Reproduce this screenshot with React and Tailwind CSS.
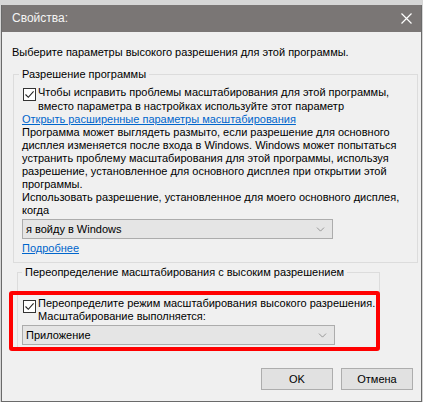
import { ChevronDown } from "lucide-react";

const CheckBox = () => (
  <span className="w-[13px] h-[13px] shrink-0 bg-white border border-[#333333] flex items-center justify-center">
    <svg width="11" height="11" viewBox="0 0 11 11" fill="none">
      <path d="M1.5 5.5 L4.3 8.3 L9.6 2.4" stroke="#222222" strokeWidth="1.1" />
    </svg>
  </span>
);

const Select = ({ value, width }) => (
  <div
    className={`h-[20px] ${width} bg-[#e5e5e5] border border-[#acacac] flex items-center justify-between pl-[3px] pr-[5px]`}
  >
    <span className="leading-[14px]">{value}</span>
    <ChevronDown size={13} strokeWidth={1} color="#555555" />
  </div>
);

const App = () => {
  return (
    <div className="w-[423px] h-[402px] bg-[#d6d6d6] pt-[5px] pl-[1px] overflow-hidden font-['Liberation_Sans',Arial,sans-serif] text-[11px] text-black whitespace-nowrap">
      <div className="w-[421px] h-[397px] bg-[#f0f0f0] border border-t-0 border-[#6a6a6a] flex flex-col">
        {/* Title bar */}
        <div className="h-[27px] bg-[#7a7675] flex items-center justify-between pl-[10px] pr-[9px] shrink-0">
          <span className="text-[#f4f4f4] text-[12px] leading-[15px]">Свойства:</span>
          <svg width="11" height="11" viewBox="0 0 11 11">
            <path d="M0.5 0.5 L10.5 10.5 M10.5 0.5 L0.5 10.5" stroke="#ffffff" strokeWidth="1.2" />
          </svg>
        </div>

        {/* Body */}
        <div className="flex-1 flex flex-col relative">
          <p className="ml-[10px] mt-[13px] leading-[15px]">
            Выберите параметры высокого разрешения для этой программы.
          </p>

          {/* Group 1 */}
          <fieldset className="ml-[11px] mt-[7px] w-[405px] border border-[#dcdcdc] pl-[8px] pr-[4px] pb-[7px]">
            <legend className="-ml-[3px] px-[3px] leading-[15px]">Разрешение программы</legend>
            <div className="flex mt-[3px]">
              <span className="ml-[1px] mt-[3px]">
                <CheckBox />
              </span>
              <span className="ml-[2px] leading-[14px]">
                Чтобы исправить проблемы масштабирования для этой программы,
                <br />
                вместо параметра в настройках используйте этот параметр
              </span>
            </div>
            <a className="block leading-[13px] text-[#0066cc] underline w-fit">
              Открыть расширенные параметры масштабирования
            </a>
            <p className="leading-[13px]">
              Программа может выглядеть размыто, если разрешение для основного
              <br />
              дисплея изменяется после входа в Windows. Windows может попытаться
              <br />
              устранить проблему масштабирования для этой программы, используя
              <br />
              разрешение, установленное для основного дисплея при открытии этой
              <br />
              программы.
              <br />
              Использовать разрешение, установленное для моего основного дисплея,
              <br />
              когда
            </p>
            <div className="mt-[2px]">
              <Select value="я войду в Windows" width="w-[311px]" />
            </div>
            <a className="block mt-[3px] leading-[13px] text-[#0066cc] underline w-fit">Подробнее</a>
          </fieldset>

          {/* Group 2 */}
          <fieldset className="ml-[15px] mt-[2px] w-[363px] border border-[#dcdcdc] pl-[4px] pb-[4px]">
            <legend className="px-[3px] leading-[15px]">
              Переопределение масштабирования с высоким разрешением
            </legend>
            <div className="flex mt-[17px]">
              <span className="ml-[1px] mt-[3px]">
                <CheckBox />
              </span>
              <span className="ml-[2px] leading-[13px]">
                Переопределите режим масштабирования высокого разрешения.
                <br />
                Масштабирование выполняется:
              </span>
            </div>
            <div className="mt-[2px]">
              <Select value="Приложение" width="w-[313px]" />
            </div>
          </fieldset>

          {/* Red highlight */}
          <div className="absolute left-[7px] top-[259px] w-[371px] h-[60px] border-4 border-[#ff0000] rounded-[3px] pointer-events-none" />

          {/* Buttons */}
          <div className="mt-auto flex justify-end gap-[8px] pr-[8px] pb-[11px]">
            <button className="w-[72px] h-[22px] bg-[#e1e1e1] border border-[#adadad] leading-[14px]">OK</button>
            <button className="w-[72px] h-[22px] bg-[#e1e1e1] border border-[#adadad] leading-[14px]">Отмена</button>
          </div>
        </div>
      </div>
    </div>
  );
};

export default App;
